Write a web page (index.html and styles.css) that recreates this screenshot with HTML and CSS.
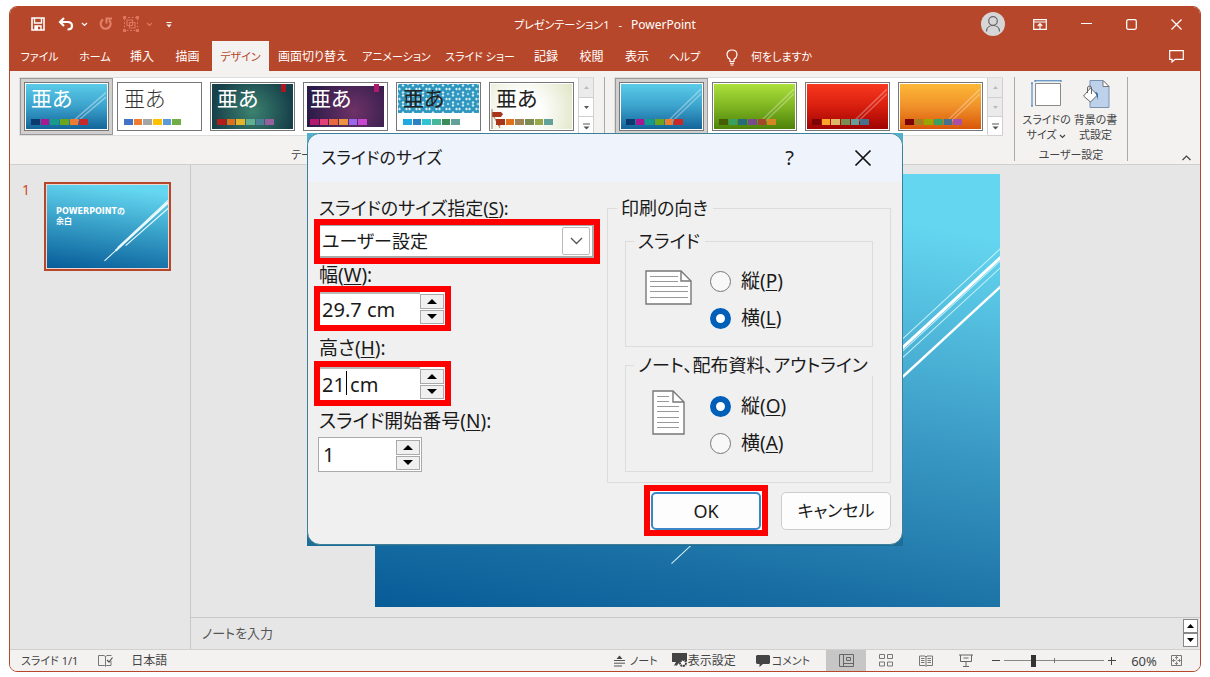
FILE: index.html
```html
<!DOCTYPE html>
<html lang="ja">
<head>
<meta charset="utf-8">
<title>プレゼンテーション1 - PowerPoint</title>
<link rel="stylesheet" href="styles.css">
</head>
<body>
<div class="window">
  <header class="titlebar">
    <div class="quick">
      <button class="ico" aria-label="保存"><svg width="14" height="14" viewBox="0 0 14 14"><path d="M1 1h12v12H1z" fill="none" stroke="#fff" stroke-width="1.6"/><path d="M3.5 1v5h7V1M4 13V9h6v4" fill="none" stroke="#fff" stroke-width="1.4"/><path d="M4 9h3v4H4z" fill="#fff"/></svg></button>
      <button class="ico undo" aria-label="元に戻す"><svg width="16" height="14" viewBox="0 0 16 14"><path d="M6 1 2 5l4 4M2.500 5H9.500c6 0 6 7.500 0 7.500" fill="none" stroke="#fff" stroke-width="2.200"/></svg><svg width="7" height="5" viewBox="0 0 7 5"><path d="m1 1 2.500 2.500L6 1" fill="none" stroke="#fff" stroke-width="1.200"/></svg></button>
      <button class="ico redo" aria-label="やり直し"><svg width="14" height="14" viewBox="0 0 14 14"><path d="M4 2.500A5 5 0 1 0 10 3M7.500 6.500V1.500H13" fill="none" stroke="#e2806a" stroke-width="2.100"/></svg></button>
      <button class="ico group" aria-label="グループ化"><svg width="16" height="16" viewBox="0 0 16 16"><path d="M1.500 1.500h13v13h-13z" fill="none" stroke="#dc7460" stroke-dasharray="2 1.500"/><path d="M4 4h5.500v5.500H4zM6.500 6.500H12V12H6.500z" fill="none" stroke="#dc7460" stroke-width="1.200"/><path d="M0 0h3v3H0zM13 0h3v3h-3zM0 13h3v3H0zM13 13h3v3h-3z" fill="#dc7460"/></svg><svg width="7" height="5" viewBox="0 0 7 5"><path d="m1 1 2.500 2.500L6 1" fill="none" stroke="#dc7460" stroke-width="1.200"/></svg></button>
      <button class="ico" aria-label="クイック アクセス ツール バーのユーザー設定"><svg width="6" height="7" viewBox="0 0 6 7"><path d="M.5 1.500h5" stroke="#fff"/><path d="M.5 3.500h5L3 6.500z" fill="#fff"/></svg></button>
    </div>
    <div class="doc"><span>プレゼンテーション1</span><span>-</span><span class="app">PowerPoint</span></div>
    <div class="controls">
      <button class="avatar" aria-label="アカウント"><svg width="18" height="18" viewBox="0 0 18 18"><circle cx="9" cy="6" r="4.300" fill="none" stroke="#666" stroke-width="1.200"/><path d="M2.500 16.500c0-8 13-8 13 0" fill="none" stroke="#666" stroke-width="1.200"/></svg></button>
      <button class="ico" aria-label="リボンの表示オプション"><svg width="14" height="11" viewBox="0 0 14 11"><path d="M.7.700h12.600v9.600H.7zM.7 3h12.600" fill="none" stroke="#fff" stroke-width="1.200"/><path d="M7 10V5M4.700 7 7 4.700 9.300 7" fill="none" stroke="#fff" stroke-width="1.200"/></svg></button>
      <button class="ico" aria-label="最小化"><svg width="11" height="11" viewBox="0 0 11 11"><path d="M0 4.500h11" stroke="#fff" stroke-width="1.200"/></svg></button>
      <button class="ico" aria-label="最大化"><svg width="11" height="11" viewBox="0 0 11 11"><rect x=".7" y=".7" width="9.600" height="9.600" rx="1.500" fill="none" stroke="#fff" stroke-width="1.300"/></svg></button>
      <button class="ico" aria-label="閉じる"><svg width="11" height="11" viewBox="0 0 11 11"><path d="m.5.500 10 10M10.500.500l-10 10" stroke="#fff" stroke-width="1.300"/></svg></button>
    </div>
  </header>

  <nav class="tabs">
    <button class="kana">ファイル</button><button class="kana">ホーム</button><button>挿入</button><button>描画</button><button class="kana active">デザイン</button><button>画面切り替え</button><button class="kana">アニメーション</button><button class="kana">スライド ショー</button><button>記録</button><button>校閲</button><button>表示</button><button class="kana">ヘルプ</button>
    <button class="kana tell"><svg width="12" height="17" viewBox="0 0 12 17"><path d="M4 12.500V10.500C2.500 9.500 1 8 1 5.800 1 3 3 1 6 1s5 2 5 4.800C11 8 9.500 9.500 8 10.500v2z" fill="none" stroke="#fff" stroke-width="1.200"/><path d="M4 14.300h4M4.500 16h3" stroke="#fff"/></svg>何をしますか</button>
    <button class="comment" aria-label="コメント"><svg width="15" height="13" viewBox="0 0 15 13"><path d="M.7.700h13.600v8.600H6L3 12V9.300H.7z" fill="none" stroke="#fff" stroke-width="1.200"/></svg></button>
  </nav>

  <section class="ribbon">
    <div class="group-box">
      <div class="gallery">
        <button class="cell selected"><span class="theme t-blue"><span class="sample">亜あ</span><svg class="streak" viewBox="0 0 30 30"><path d="M0 30 30 4M4 30 30 8" stroke="#fff" stroke-opacity=".4" stroke-width="1.300"/></svg><span class="swatches"><i class="c-navy"></i><i class="c-purple"></i><i class="c-teal"></i><i class="c-green"></i><i class="c-orange"></i><i class="c-red"></i></span></span></button>
        <button class="cell"><span class="theme t-white"><span class="sample light">亜あ</span><span class="swatches"><i class="c-blue"></i><i class="c-orange"></i><i class="c-gray"></i><i class="c-yellow"></i><i class="c-sky"></i><i class="c-leaf"></i></span></span></button>
        <button class="cell"><span class="theme t-dark"><span class="sample">亜あ</span><b class="flag f-red"></b><span class="swatches"><i class="c-brick"></i><i class="c-amber"></i><i class="c-gold"></i><i class="c-sea"></i><i class="c-slate"></i><i class="c-mauve"></i></span></span></button>
        <button class="cell"><span class="theme t-plum"><span class="sample">亜あ</span><b class="flag f-pink"></b><span class="swatches"><i class="c-magenta"></i><i class="c-rose"></i><i class="c-coral"></i><i class="c-peach"></i><i class="c-violet"></i><i class="c-orchid"></i></span></span></button>
        <button class="cell"><span class="theme t-pattern"><svg class="pattern" width="81" height="29"><defs><pattern id="dots" width="10" height="10" patternUnits="userSpaceOnUse"><rect width="10" height="10" fill="#2f96c0"/><path d="M5 0 6.500 1.500 5 3 3.500 1.500zM5 7l1.500 1.500L5 10 3.500 8.500zM0 5l1.500-1.500L3 5 1.500 6.500zM7 5l1.500-1.500L10 5 8.500 6.500z" fill="#d4eef7"/><path d="M0 0h1.500L0 1.500zM10 0v1.500L8.500 0zM0 10V8.500L1.500 10zM10 10H8.500L10 8.500z" fill="#a8dcee"/></pattern></defs><rect width="81" height="29" fill="url(#dots)"/></svg><span class="sample">亜あ</span><span class="swatches"><i class="c-cyan"></i><i class="c-azure"></i><i class="c-aqua"></i><i class="c-mint"></i><i class="c-forest"></i><i class="c-sage"></i></span></span></button>
        <button class="cell"><span class="theme t-leaf"><svg class="twig" width="14" height="20" viewBox="0 0 14 20"><path d="M1 3h9l2 2-2 3H1zM5 12l6 1-2 4-3-2z" fill="#a8341a"/><path d="M3 8l6 11M1 0v20" stroke="#9a7b62" fill="none"/></svg><span class="sample">亜あ</span><span class="swatches"><i class="c-rust"></i><i class="c-amber"></i><i class="c-tan"></i><i class="c-moss"></i><i class="c-lime"></i><i class="c-sage"></i></span></span></button>
        <div class="scroller"><button class="off" aria-label="前の行"><svg width="5" height="3" viewBox="0 0 5 3"><path d="M0 3h5L2.500 0z" fill="#bbb"/></svg></button><button aria-label="次の行"><svg width="5" height="3" viewBox="0 0 5 3"><path d="M0 0h5L2.500 3z" fill="#555"/></svg></button><button aria-label="その他"><svg width="7" height="7" viewBox="0 0 7 7"><path d="M0 1h7" stroke="#555"/><path d="M.5 3.500h6l-3 3z" fill="#555"/></svg></button></div>
      </div>
      <div class="caption">テーマ</div>
    </div>
    <div class="group-box variants">
      <div class="gallery">
        <button class="cell selected"><span class="theme t-blue"><svg class="streak" viewBox="0 0 30 30"><path d="M0 30 30 1M4 30 30 5" stroke="#fff" stroke-opacity=".35" stroke-width="1.300"/></svg><span class="swatches"><i class="c-navy"></i><i class="c-purple"></i><i class="c-teal"></i><i class="c-green"></i><i class="c-orange"></i><i class="c-red"></i></span></span></button>
        <button class="cell"><span class="theme t-green"><svg class="streak" viewBox="0 0 30 30"><path d="M0 30 30 1M4 30 30 5" stroke="#fff" stroke-opacity=".3" stroke-width="1.300"/></svg><span class="swatches"><i class="c-olive"></i><i class="c-jade"></i><i class="c-petrol"></i><i class="c-grape"></i><i class="c-clay"></i><i class="c-ochre"></i></span></span></button>
        <button class="cell"><span class="theme t-red"><svg class="streak" viewBox="0 0 30 30"><path d="M0 30 30 1M4 30 30 5" stroke="#fff" stroke-opacity=".3" stroke-width="1.300"/></svg><span class="swatches"><i class="c-maroon"></i><i class="c-sun"></i><i class="c-sand"></i><i class="c-moss"></i><i class="c-sage"></i><i class="c-steel"></i></span></span></button>
        <button class="cell"><span class="theme t-orange"><svg class="streak" viewBox="0 0 30 30"><path d="M0 30 30 1M4 30 30 5" stroke="#fff" stroke-opacity=".3" stroke-width="1.300"/></svg><span class="swatches"><i class="c-maroon"></i><i class="c-bronze"></i><i class="c-pear"></i><i class="c-jade"></i><i class="c-steel"></i><i class="c-lilac"></i></span></span></button>
        <div class="scroller"><button class="off" aria-label="前の行"><svg width="5" height="3" viewBox="0 0 5 3"><path d="M0 3h5L2.500 0z" fill="#bbb"/></svg></button><button class="off" aria-label="次の行"><svg width="5" height="3" viewBox="0 0 5 3"><path d="M0 0h5L2.500 3z" fill="#bbb"/></svg></button><button aria-label="その他"><svg width="7" height="7" viewBox="0 0 7 7"><path d="M0 1h7" stroke="#555"/><path d="M.5 3.500h6l-3 3z" fill="#555"/></svg></button></div>
      </div>
    </div>
    <div class="group-box custom">
      <div class="big-buttons">
        <button><svg width="31" height="28" viewBox="0 0 31 28"><path d="M4.500 3.500h25v22h-25z" fill="#fff" stroke="#8a8a8a"/><path d="M4 .8h26M1 3v23M4 0v2M30 0v2M0 3h2M0 26h2" stroke="#3a77b5" fill="none"/></svg><span>スライドの<br>サイズ <svg width="7" height="5" viewBox="0 0 7 5"><path d="m1 1 2.500 2.500L6 1" fill="none" stroke="#444" stroke-width="1.200"/></svg></span></button>
        <button><svg width="28" height="28" viewBox="0 0 28 28"><path d="M8 .5h13l6 6v21H8z" fill="#bdd2ea" stroke="#7a93b0"/><path d="M21 .5v6h6z" fill="#fff" stroke="#777"/><path d="m1.500 16 7-8 7 7-7 7z" fill="#fff" stroke="#666"/><path d="M5.500 13V8a2 2 0 0 1 4 0v6" fill="none" stroke="#666"/><path d="M13 12c4 0 3 4 2.500 8l-1-5z" fill="#2767a8"/></svg><span>背景の書<br>式設定</span></button>
      </div>
      <div class="caption">ユーザー設定</div>
    </div>
    <button class="collapse" aria-label="リボンを折りたたむ"><svg width="9" height="6" viewBox="0 0 9 6"><path d="M.5 5 4.500 1l4 4" fill="none" stroke="#444" stroke-width="1.200"/></svg></button>
  </section>

  <main class="work">
    <aside class="thumbs">
      <span class="num">1</span>
      <button class="slide-thumb"><span class="mini"><span class="mini-title">POWERPOINTの<br>余白</span><svg viewBox="0 0 120 82"><g stroke="#eafaff" fill="none"><path d="M57 75 120 18" stroke-width="1"/><path d="M68 65 120 17" stroke-width="2"/><path d="M70 62 120 15" stroke-width="1"/><path d="M78 60 120 23" stroke-width="1.200"/></g></svg></span></button>
    </aside>
    <div class="editor">
      <div class="canvas">
        <div class="slide"><svg viewBox="0 0 624 432"><g stroke="#fff" fill="none"><path d="M296 389 625 82" stroke="#d8f1f9"/><path d="M380 300 625 74" stroke="#c8f1fa"/><path d="M400 290 625 83" stroke-width="3"/><path d="M400 294 625 86" stroke="#c8f1fa"/><path d="M400 300 625 93" stroke="#c8f1fa"/><path d="M420 301 625 112" stroke-width="2.500"/></g></svg></div>
      </div>
      <div class="notes"><span>ノートを入力</span><div class="notes-scroll"><button aria-label="上へ"><svg width="7" height="4" viewBox="0 0 7 4"><path d="M0 4h7L3.500 0z" fill="#000"/></svg></button><button aria-label="下へ"><svg width="7" height="4" viewBox="0 0 7 4"><path d="M0 0h7L3.500 4z" fill="#000"/></svg></button></div></div>
    </div>
  </main>

  <footer class="status">
    <span class="kana">スライド 1/1</span>
    <button class="spell" aria-label="スペル チェック"><svg width="15" height="12" viewBox="0 0 15 12"><path d="M7.500 1.500V11M13 6v4.500H8.500l-1 1-1-1H.5v-10h5.500l1.500 1 1.500-1h4.500" fill="none" stroke="#777"/><path d="m9 5 2 2 3.500-4.500" fill="none" stroke="#555" stroke-width="1.200"/></svg></button>
    <span>日本語</span>
    <div class="status-right">
      <button class="st st-note kana"><svg width="11" height="12" viewBox="0 0 11 12"><path d="M2.500 4h6l-3-3.500z" fill="#444"/><path d="M0 5.500h11M0 8.200h11M0 11h8" stroke="#555"/></svg>ノート</button>
      <button class="st st-view"><svg width="16" height="15" viewBox="0 0 16 15"><path d="M0 0h15v8H9l-3 3-1 1.500H2L4 9H0z" fill="#444"/><circle cx="11" cy="10" r="3" fill="#fff" stroke="#444" stroke-width="2" stroke-dasharray="2 .6"/></svg>表示設定</button>
      <button class="st st-comment kana"><svg width="14" height="12" viewBox="0 0 14 12"><path d="M1 0h12l1 1v7l-1 1H7l-3.500 3V9H1L0 8V1z" fill="#444"/></svg>コメント</button>
      <div class="views">
        <button class="on" aria-label="標準"><svg width="15" height="13" viewBox="0 0 15 13"><path d="M.5.500h14v12H.5zM4.500.500v12M4.500 9.500h10M7.500 3.500h4v3h-4z" fill="none" stroke="#666"/></svg></button>
        <button aria-label="スライド一覧"><svg width="14" height="13" viewBox="0 0 14 13"><path d="M.5.500h5v4h-5zM8.500.500h5v4h-5zM.5 8h5v4h-5zM8.500 8h5v4h-5z" fill="none" stroke="#777"/></svg></button>
        <button aria-label="閲覧表示"><svg width="14" height="12" viewBox="0 0 14 12"><path d="M.5 1h5.500l1 1 1-1h5.500v9.500H8l-1 1-1-1H.5zM7 2v9M2 3.500h3.500M2 5.500h3.500M2 7.500h3.500M8.500 3.500H12M8.500 5.500H12M8.500 7.500H12" fill="none" stroke="#777"/></svg></button>
        <button aria-label="スライド ショー"><svg width="14" height="13" viewBox="0 0 14 13"><path d="M0 1h14M1.500 1v6.500h11V1M7 7.500V12M4 12.500h6M4.500 4h5" fill="none" stroke="#666"/></svg></button>
      </div>
      <button class="zoom-btn" aria-label="縮小"><svg width="8" height="8" viewBox="0 0 8 8"><path d="M0 3.500h8" stroke="#444"/></svg></button>
      <input class="zoom" type="range" min="0" max="100" value="28" aria-label="ズーム">
      <button class="zoom-btn" aria-label="拡大"><svg width="8" height="8" viewBox="0 0 8 8"><path d="M0 3.500h8M3.500 0v8" stroke="#444"/></svg></button>
      <button class="percent">60%</button>
      <button class="fit" aria-label="ウィンドウに合わせる"><svg width="11" height="11" viewBox="0 0 11 11"><path d="M.5.500h10v10H.5z" fill="none" stroke="#777"/><path d="M5.500 1.500v3M5.500 6.500v3M1.500 5.500h3M6.500 5.500h3M4 3l1.500-1.500L7 3M4 8l1.500 1.500L7 8M3 4 1.500 5.500 3 7M8 4l1.500 1.500L8 7" fill="none" stroke="#666" stroke-width=".8"/></svg></button>
    </div>
  </footer>

  <div class="overlay">
    <div class="backdrop">
      <form class="dialog" role="dialog" aria-labelledby="dlg-title">
        <div class="dlg-head">
          <h1 id="dlg-title">スライドのサイズ</h1>
          <button type="button" class="help" aria-label="ヘルプ">?</button>
          <button type="button" class="close" aria-label="閉じる"><svg width="18" height="18" viewBox="0 0 18 18"><path d="m1.500 1.500 15 15M16.500 1.500l-15 15" stroke="#111" stroke-width="1.700"/></svg></button>
        </div>
        <div class="dlg-body">
          <div class="sizes">
            <label for="preset">スライドのサイズ指定(<u>S</u>):</label>
            <div class="mark combo">
              <select id="preset"><option>ユーザー設定</option></select>
              <span class="arrow"><svg width="13" height="8" viewBox="0 0 13 8"><path d="m1 1 5.500 5.500L12 1" fill="none" stroke="#555" stroke-width="1.300"/></svg></span>
            </div>
            <label for="w" class="lab">幅(<u>W</u>):</label>
            <div class="mark spin"><input id="w" type="text" value="29.7 cm"><span class="steps"><button type="button" aria-label="増やす"><svg width="10" height="5" viewBox="0 0 10 5"><path d="M0 5h10L5 0z"/></svg></button><button type="button" aria-label="減らす"><svg width="10" height="5" viewBox="0 0 10 5"><path d="M0 0h10L5 5z"/></svg></button></span></div>
            <label for="h" class="lab lab-h">高さ(<u>H</u>):</label>
            <div class="mark spin"><input id="h" type="text" value="21 cm"><span class="caret"></span><span class="steps"><button type="button" aria-label="増やす"><svg width="10" height="5" viewBox="0 0 10 5"><path d="M0 5h10L5 0z"/></svg></button><button type="button" aria-label="減らす"><svg width="10" height="5" viewBox="0 0 10 5"><path d="M0 0h10L5 5z"/></svg></button></span></div>
            <label for="n" class="lab lab-n">スライド開始番号(<u>N</u>):</label>
            <div class="spin plain"><input id="n" type="text" value="1"><span class="steps"><button type="button" aria-label="増やす"><svg width="10" height="5" viewBox="0 0 10 5"><path d="M0 5h10L5 0z"/></svg></button><button type="button" aria-label="減らす"><svg width="10" height="5" viewBox="0 0 10 5"><path d="M0 0h10L5 5z"/></svg></button></span></div>
          </div>
          <div class="right">
            <fieldset class="orient">
              <legend>印刷の向き</legend>
              <fieldset>
                <legend>スライド</legend>
                <div class="choice">
                  <svg width="48" height="36" viewBox="0 0 48 36"><path d="M1 1h35l10 10v23H1z" fill="#fff" stroke="#777" stroke-width="1.400"/><path d="M36 1v10h10" fill="none" stroke="#777" stroke-width="1.400"/><path d="M5 6.500h28M5 11.500h28M5 16.500h38M5 21.500h38M5 27.500h38" stroke="#999"/></svg>
                  <div class="radios"><label><input type="radio" name="slide"><span>縦(<u>P</u>)</span></label><label><input type="radio" name="slide" checked><span>横(<u>L</u>)</span></label></div>
                </div>
              </fieldset>
              <fieldset class="second">
                <legend>ノート、配布資料、アウトライン</legend>
                <div class="choice">
                  <svg width="48" height="46" viewBox="0 0 48 46"><path d="M8 1h20l11 11v32H8z" fill="#fff" stroke="#777" stroke-width="1.400"/><path d="M28 1v11h11" fill="none" stroke="#777" stroke-width="1.400"/><path d="M12 6.500h12M12 11.500h12M12 16.500h22M12 21.500h22M12 27.500h22M12 32.500h22M12 37.500h22" stroke="#999"/></svg>
                  <div class="radios"><label><input type="radio" name="note" checked><span>縦(<u>O</u>)</span></label><label><input type="radio" name="note"><span>横(<u>A</u>)</span></label></div>
                </div>
              </fieldset>
            </fieldset>
            <div class="actions"><div class="mark ok-mark"><button type="button" class="btn ok">OK</button></div><button type="button" class="btn">キャンセル</button></div>
          </div>
        </div>
      </form>
    </div>
  </div>
</div>
</body>
</html>
```
FILE: styles.css
```css
* { box-sizing: border-box; }
body {
  margin: 0;
  padding: 6px 9px 5px;
  height: 100vh;
  background: #fff;
  color: #444;
  font: 12px/16px "Noto Sans", "Noto Sans CJK JP", sans-serif;
  font-feature-settings: "palt";
  white-space: nowrap;
}
button, input, select { font: inherit; font-feature-settings: inherit; color: inherit; }
button { padding: 0; border: 0; background: none; }
svg { display: block; flex: none; }
.kana { font-size: 11px; }

.window {
  position: relative;
  display: flex;
  flex-direction: column;
  height: 100%;
  border: 1px solid #b7472a;
  border-radius: 8px;
  overflow: hidden;
  background: #e6e6e6;
}

/* title bar */
.titlebar {
  display: grid;
  grid-template-columns: 1fr auto 1fr;
  align-items: center;
  height: 34px;
  background: #b7472a;
  color: #fff;
}
.quick { display: flex; align-items: center; padding-left: 21px; gap: 13px; }
.quick .ico { display: flex; align-items: center; gap: 7px; }
.quick .redo { margin-left: -2px; }
.quick .group { margin-left: -3px; }
.doc { display: flex; gap: 9px; padding-top: 2px; font-size: 11px; }
.app { font-size: 12px; }
.controls { display: flex; justify-content: flex-end; align-items: center; gap: 34px; padding-right: 18px; }
.avatar { display: grid; place-items: center; width: 24px; height: 24px; border-radius: 50%; background: #d6d6d6; margin-right: -6px; }

/* tab strip */
.tabs {
  display: grid;
  grid-template-columns: 59px 52px 42px 49px 57px 87px 81px 86px 46px 45px 46px 49px auto 1fr;
  height: 30px;
  background: #b7472a;
}
.tabs button { display: flex; align-items: center; justify-content: center; padding-top: 2px; color: #fff; }
.tabs .active { background: #f3f2f1; color: #b7472a; }
.tabs .tell { gap: 13px; padding-left: 17px; }
.tabs .comment { justify-content: flex-end; padding: 0 16px 0 0; }

/* ribbon */
.ribbon {
  display: flex;
  height: 94px;
  padding: 6px 0 3px 9px;
  background: #f3f2f1;
  border-bottom: 1px solid #d2d0ce;
}
.group-box { display: flex; flex-direction: column; justify-content: space-between; padding-right: 10px; border-right: 1px solid #aaa; }
.group-box.variants { padding: 0 11px 0 9px; }
.gallery { display: flex; height: 59px; background: #fff; border: 1px solid #ddd; border-right: 0; }
.cell { width: 93px; padding: 4px; }
.cell.selected { background: #d2d0ce; border: 1px solid #999; padding: 3px; }
.theme {
  position: relative;
  display: flex;
  flex-direction: column;
  justify-content: flex-end;
  height: 49px;
  padding: 0 0 5px 6px;
  border: 1px solid #777;
  outline: 1px solid #fff;
  outline-offset: -2px;
  text-align: left;
  color: #fff;
}
.sample { position: relative; margin-bottom: 7px; font-size: 21px; line-height: 28px; }
.light { font-weight: 300; }
.swatches { position: relative; display: flex; gap: 1px; width: 57px; height: 6px; }
.swatches i { flex: 1; }
.streak { position: absolute; right: 2px; top: 2px; width: 34px; height: 40px; }
.flag { position: absolute; right: 8px; top: 1px; width: 5px; height: 8px; }
.f-red { background: #a81820; }
.f-pink { background: #b0186c; }
.pattern { position: absolute; left: 1px; top: 1px; }
.twig { position: absolute; left: 1px; bottom: 1px; }
.t-blue { background: linear-gradient(#5ccdea, #3ba2cc 50%, #126298); }
.t-white { background: #fff; color: #333; }
.t-dark { background: radial-gradient(circle at 50% 60%, #3c8270, #17404a 80%); }
.t-plum { background: radial-gradient(circle at 60% 60%, #6f3268, #2a1b48 80%); outline: 3px solid #fff; outline-offset: -4px; }
.t-pattern { background: #fff; color: #222; }
.t-leaf { background: radial-gradient(circle at 40% 60%, #fff 30%, #dfe5c4); color: #222; }
.t-green { background: linear-gradient(#aee23c, #7fb522 50%, #4a8008); }
.t-red { background: linear-gradient(#fa3a20, #d81e0e 50%, #9c0202); }
.t-orange { background: linear-gradient(#fdba38, #f0912a 50%, #d85408); }
.c-navy { background: #0b3a6e; } .c-purple { background: #a81890; } .c-teal { background: #169a8c; }
.c-green { background: #6aa51c; } .c-orange { background: #ed7d31; } .c-red { background: #c82828; }
.c-blue { background: #4472c4; } .c-gray { background: #a5a5a5; } .c-yellow { background: #ffc000; }
.c-sky { background: #5b9bd5; } .c-leaf { background: #70ad47; } .c-brick { background: #b31c1c; }
.c-amber { background: #e0701c; } .c-gold { background: #e4b52c; } .c-sea { background: #62ae90; }
.c-slate { background: #4c8096; } .c-mauve { background: #96609c; } .c-magenta { background: #b4186c; }
.c-rose { background: #e23e78; } .c-coral { background: #e86640; } .c-peach { background: #ee9440; }
.c-violet { background: #9a66ee; } .c-orchid { background: #c846d0; } .c-cyan { background: #20a8e0; }
.c-azure { background: #2c80c4; } .c-aqua { background: #30c4d0; } .c-mint { background: #46b89a; }
.c-forest { background: #3c8c58; } .c-sage { background: #62a09a; } .c-rust { background: #a8341a; }
.c-tan { background: #a08258; } .c-moss { background: #7a8c54; } .c-lime { background: #96a848; }
.c-olive { background: #455e06; } .c-jade { background: #38a060; } .c-petrol { background: #266c78; }
.c-grape { background: #784c8c; } .c-clay { background: #a0482a; } .c-ochre { background: #d48620; }
.c-maroon { background: #7c0404; } .c-sun { background: #fca428; } .c-sand { background: #dcb868; }
.c-steel { background: #47708c; } .c-bronze { background: #a08020; } .c-pear { background: #98a800; }
.c-lilac { background: #a850a8; }
.scroller { display: grid; grid-template-rows: 20px 19px 19px; width: 16px; border: 1px solid #d0d0d0; border-width: 0 1px; }
.scroller button { display: grid; place-items: center; border-bottom: 1px solid #d0d0d0; }
.scroller .off { background: #ebebeb; }
.caption { text-align: center; line-height: 12px; font-size: 11px; }
.custom { padding: 0 8px; }
.big-buttons { display: flex; justify-content: space-between; padding-top: 3px; width: 96px; }
.big-buttons button { display: flex; flex-direction: column; align-items: center; gap: 4px; width: 47px; font-size: 11px; line-height: 15px; }
.big-buttons span svg { display: inline-block; vertical-align: middle; }
.collapse { margin-left: auto; padding-right: 9px; align-self: flex-end; }

/* workspace */
.work { display: flex; flex: 1; min-height: 0; }
.thumbs { display: flex; width: 181px; padding: 17px 0 0 12px; gap: 14px; border-right: 1px solid #c8c8c8; align-items: flex-start; }
.num { color: #d24726; font-size: 14px; line-height: 16px; }
.slide-thumb { width: 127px; padding: 1px; border: 2px solid #b7472a; background: #eed5cf; }
.mini { position: relative; display: block; height: 83px; padding: 22px 0 0 9px; background: linear-gradient(188deg, #64d6f0 10%, #38a0c8 50%, #075c98); text-align: left; }
.mini svg { position: absolute; inset: 0; width: 100%; height: 100%; }
.mini-title { display: block; color: #fff; font: bold 8px/10px "DejaVu Sans", "Noto Sans CJK JP", sans-serif; }
.editor { display: flex; flex-direction: column; flex: 1; }
.canvas { flex: 1; display: flex; justify-content: center; padding: 9px 16px 10px 0; }
.slide { width: 625px; background: linear-gradient(190deg, #64d6f0 12%, #3c9cc6 50%, #1a70a4 82%, #075c98); }
.slide svg { width: 100%; height: 100%; }
.notes { display: flex; align-items: center; justify-content: space-between; height: 33px; padding: 0 2px 0 11px; border-top: 1px solid #c8c8c8; font-size: 13px; color: #555; }
.notes-scroll { display: grid; gap: 0; }
.notes-scroll button { display: grid; place-items: center; width: 15px; height: 14px; border: 1px solid #888; background: #fff; }

/* status bar */
.status { display: flex; align-items: center; height: 22px; padding-left: 11px; background: #f3f2f1; border-top: 1px solid #d0d0d0; }
.spell { margin: 0 18px 0 20px; }
.status-right { display: flex; align-items: center; height: 100%; margin-left: auto; padding-right: 18px; }
.st { display: flex; align-items: center; }
.st-note { gap: 5px; margin-right: 14px; }
.st-view { margin-right: 20px; }
.st-comment { gap: 2px; margin-right: 16px; }
.views { display: flex; height: 100%; }
.views button { display: grid; place-items: center; width: 40px; }
.views .on { background: #c6c6c6; }
.zoom-btn { padding: 4px; }
.views + .zoom-btn { margin-left: 2px; }
.zoom {
  appearance: none;
  width: 100px;
  height: 14px;
  margin: 0;
  background:
    linear-gradient(#777, #777) 50px 50% / 1px 5px no-repeat,
    linear-gradient(#888, #888) 0 50% / 100% 1px no-repeat;
}
.zoom::-webkit-slider-thumb { appearance: none; width: 5px; height: 12px; background: #333; }
.percent { width: 28px; margin: 0 13px 0 10px; font-size: 13px; }

/* dialog */
.overlay { position: absolute; inset: 0; display: flex; justify-content: center; align-items: flex-start; padding-top: 126px; }
.backdrop { width: 596px; background: linear-gradient(#4fb2ca, #1d6d96); border-bottom: 1px solid #1d6d96; }
.dialog { border: 1px solid #3d7f98; border-radius: 13px; background: #f0f0f0; color: #1a1a1a; font-size: 18px; line-height: 22px; overflow: hidden; }
.dlg-head { display: flex; align-items: center; height: 48px; padding: 0 30px 0 13px; background: #eff3fb; }
.dlg-head h1 { flex: 1; margin: 0; font-size: 17px; font-weight: 400; }
.help { font-size: 20px; }
.close { margin-left: 60px; }
.dlg-body { display: flex; justify-content: space-between; padding: 15px 11px 8px 6px; }
.sizes { display: flex; flex-direction: column; align-items: flex-start; }
.sizes > label { padding-left: 5px; }
.sizes .lab { font-size: 19px; }
.sizes .lab-h { padding-top: 6px; padding-bottom: 2px; }
.sizes .lab-n { padding-top: 4px; padding-bottom: 5px; }
u { text-underline-offset: 2px; text-decoration-thickness: 1px; }
.mark { border: 6px solid #f00; background: #fff; }
.combo { display: grid; width: 286px; height: 45px; }
.combo select, .arrow { grid-area: 1 / 1; }
.combo select { appearance: none; border: 1px solid #aaa; border-width: 1px 2px 2px 0; background: #fff; padding: 0 0 0 2px; margin: 0; border-radius: 0; }
.arrow { justify-self: end; display: grid; place-items: center; width: 28px; margin: 2px 4px 3px 0; border: 1px solid #bbb; border-radius: 2px; pointer-events: none; }
.spin { position: relative; display: flex; width: 137px; height: 45px; }
.spin input { flex: 1; min-width: 0; border: 0; border-top: 2px solid #bbb; padding: 0 0 0 2px; background: #fff; font-size: 20px; }
.spin.plain { width: 104px; height: 35px; margin-left: 4px; border: 1px solid #aaa; background: #fff; }
.plain input { border: 0; padding-left: 4px; }
.steps { display: grid; gap: 1px; width: 24px; margin: 2px 1px 1px 0; }
.steps button { display: grid; place-items: center; border: 1px solid #aaa; background: #f0f0f0; }
.caret { position: absolute; left: 26px; top: 4px; width: 1px; height: 24px; background: #000; }

.right { width: 284px; }
fieldset { margin: 0; min-width: 0; border: 1px solid #dcdcdc; }
legend { padding: 0 5px 0 4px; margin-left: -8px; }
.orient { padding: 11px 17px 10px; }
.orient legend { height: 22px; }
.orient fieldset { padding: 9px 0 12px 19px; }
.orient fieldset legend { margin-left: -11px; }
.orient .second { margin-top: 7px; padding-top: 10px; }
.choice { display: flex; align-items: flex-start; gap: 17px; }
.choice > svg { margin-top: 9px; }
.second .choice > svg { margin-top: 4px; }
.radios { display: grid; gap: 5px; padding-top: 4px; }
.radios label { display: flex; align-items: center; gap: 10px; height: 32px; font-size: 19px; }
.radios input { appearance: none; margin: 0; width: 21px; height: 21px; border: 1px solid #777; border-radius: 50%; background: #f8f8f8; }
.radios input:checked { border: 6px solid #005fb8; background: #fff; }
.actions { display: flex; justify-content: space-between; align-items: center; padding-left: 37px; margin-top: 2px; }
.btn { width: 110px; height: 38px; border: 1px solid #ccc; border-radius: 5px; background: #fdfdfd; font-size: 17px; }
.ok-mark { width: 124px; padding: 1px; height: 51px; }
.ok { border: 2px solid #3a86c8; font-size: 18px; }
```
